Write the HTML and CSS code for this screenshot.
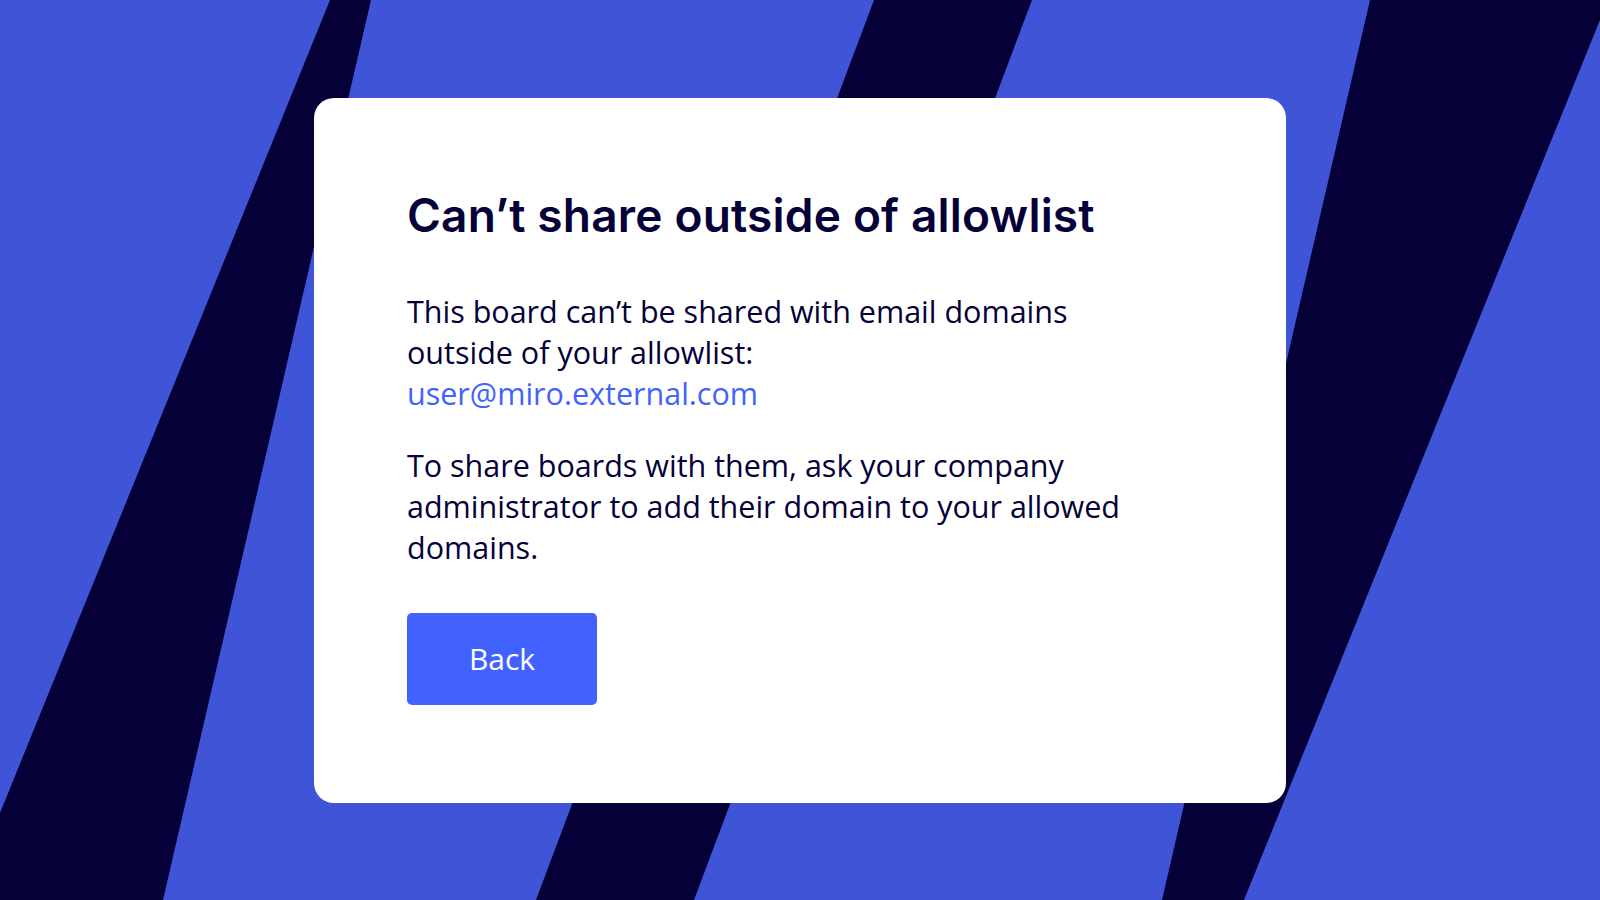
FILE: index.html
```html
<!DOCTYPE html>
<html lang="en">
<head>
<meta charset="utf-8">
<title>Can’t share outside of allowlist</title>
<link rel="stylesheet" href="styles.css">
</head>
<body>
<div class="stage">
  <svg class="backdrop" width="1600" height="900" viewBox="0 0 1600 900" aria-hidden="true">
    <rect width="1600" height="900" fill="#4054d8"/>
    <polygon points="330,0 371,0 163,900 0,900 0,813" fill="#050038"/>
    <polygon points="874,0 1032,0 694,900 536,900" fill="#050038"/>
    <polygon points="1370,0 1600,0 1600,20 1244,900 1162,900" fill="#050038"/>
  </svg>
  <main class="card">
    <h1 class="title">Can’t share outside of allowlist</h1>
    <p class="text">This board can’t be shared with email domains outside of your allowlist:<br><a class="email" href="#">user@miro.external.com</a></p>
    <p class="text">To share boards with them, ask your company administrator to add their domain to your allowed domains.</p>
    <button class="btn" type="button">Back</button>
  </main>
</div>
</body>
</html>
```

FILE: styles.css
```css
html, body {
  margin: 0;
  padding: 0;
}

body {
  width: 1600px;
  height: 900px;
  overflow: hidden;
  font-family: "Open Sans", "Noto Sans", sans-serif;
  color: #050038;
}

.stage {
  position: relative;
  width: 1600px;
  height: 900px;
  display: flex;
  align-items: center;
  justify-content: center;
}

.backdrop {
  position: absolute;
  inset: 0;
  display: block;
}

.card {
  position: relative;
  box-sizing: border-box;
  width: 972px;
  background: #ffffff;
  border-radius: 20px;
  padding: 91px 93px 98px;
  display: flex;
  flex-direction: column;
  align-items: flex-start;
}

.title {
  margin: 0;
  font-family: Inter, "Noto Sans", sans-serif;
  font-weight: 600;
  font-size: 46px;
  line-height: 52px;
  letter-spacing: 0.2px;
  color: #050038;
}

.text {
  margin: 50px 0 0;
  max-width: 740px;
  font-size: 30.5px;
  line-height: 41px;
  color: #050038;
}

.text + .text {
  margin-top: 31px;
}

.email {
  color: #4262ff;
  text-decoration: none;
}

.btn {
  margin-top: 45px;
  width: 190px;
  height: 92px;
  border: 0;
  border-radius: 5px;
  background: #4262ff;
  color: #ffffff;
  font-family: "Open Sans", "Noto Sans", sans-serif;
  font-size: 30px;
  padding: 0;
  cursor: pointer;
}
```
